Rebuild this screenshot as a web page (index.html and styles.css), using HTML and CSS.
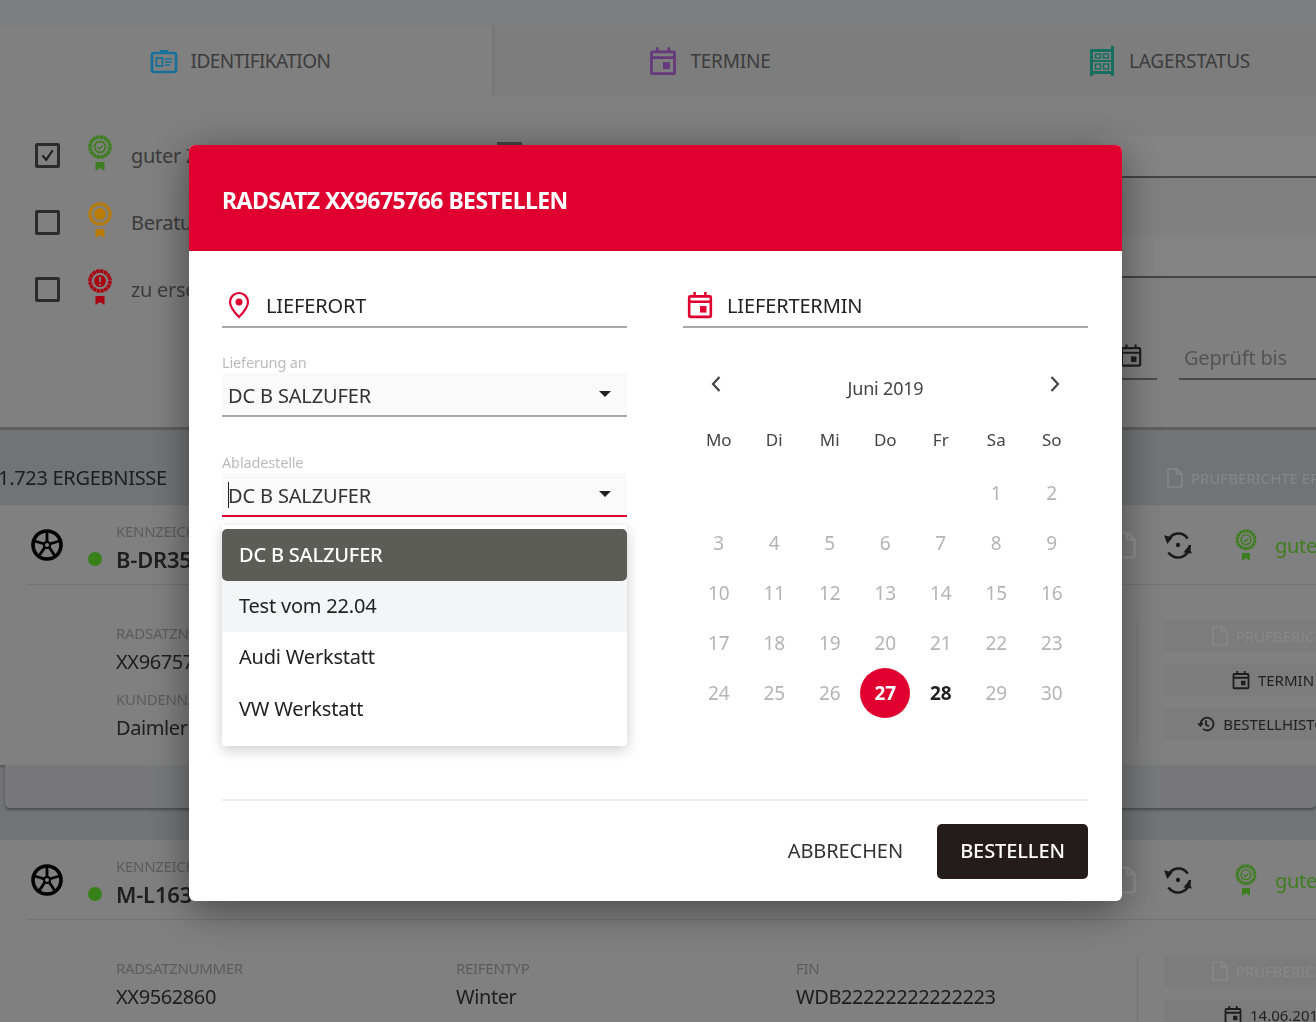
FILE: index.html
```html
<!DOCTYPE html>
<html lang="de">
<head>
    <meta charset="UTF-8">
    <title>Radsatz bestellen</title>
    <link rel="stylesheet" href="styles.css">
</head>
<body>
    <svg class="sprite" width="0" height="0">
        <symbol id="calendar" viewBox="0 0 24 26">
            <path d="M3 5h18a1 1 0 0 1 1 1v17a1 1 0 0 1-1 1H3a1 1 0 0 1-1-1V6a1 1 0 0 1 1-1zM2 10h20M7 1v5M17 1v5" fill="none" stroke="currentColor" stroke-width="2.4"/>
            <rect x="12" y="14" width="6" height="6" fill="currentColor"/>
        </symbol>
        <symbol id="medal-base" viewBox="0 0 24 36">
            <circle cx="12" cy="12" r="10" fill="none" stroke="currentColor" stroke-width="3.6" stroke-dasharray="3.4 .5"/>
            <path d="M7.500 27h9v9l-4.500-3-4.500 3z" fill="currentColor"/>
        </symbol>
        <symbol id="medal-ok" viewBox="0 0 24 36">
            <use href="#medal-base"/>
            <circle cx="12" cy="12" r="5.500" fill="none" stroke="currentColor" stroke-width="1.800"/>
            <path d="M9.500 12l2 2 3.500-3.500" fill="none" stroke="currentColor" stroke-width="1.500"/>
        </symbol>
        <symbol id="wheel" viewBox="0 0 32 34">
            <circle cx="16" cy="17" r="14" fill="none" stroke="currentColor" stroke-width="3.600"/>
            <circle cx="16" cy="17" r="3" fill="none" stroke="currentColor" stroke-width="2"/>
            <path d="M16 4v10M3.500 13l10 3M8 28l6-9M24 28l-6-9M28.500 13l-10 3" stroke="currentColor" stroke-width="2.800"/>
        </symbol>
        <symbol id="sync" viewBox="0 0 28 28">
            <path d="M5 10a10 10 0 0 1 18-2M25 14a11 11 0 0 1-20 7" fill="none" stroke="currentColor" stroke-width="2.400"/>
            <path d="M1 5l8 2-5 6zM27 22l-8-1 5-6z" fill="currentColor"/>
            <circle cx="14" cy="14" r="2" fill="currentColor"/>
        </symbol>
        <symbol id="doc" viewBox="0 0 16 20">
            <path d="M2 1h8l5 5v12a1 1 0 0 1-1 1H2a1 1 0 0 1-1-1V2a1 1 0 0 1 1-1zM9.500 1v5h5" fill="none" stroke="currentColor" stroke-width="1.600"/>
        </symbol>
        <symbol id="history" viewBox="0 0 24 24">
            <path d="M5 12a8.500 8.500 0 1 1 3 6.500M12 7v6l4 2" fill="none" stroke="currentColor" stroke-width="2.400"/>
            <path d="M0 11h9l-4.500 5z" fill="currentColor"/>
        </symbol>
    </svg>

    <div class="page">
        <div class="topbar"></div>

        <nav class="tabs">
            <div class="tab tab-first">
                <svg class="tab-icon icon-blue" viewBox="0 0 28 26">
                    <rect x="2" y="5" width="24" height="19" rx="2" fill="none" stroke="currentColor" stroke-width="2.600"/>
                    <path d="M10 2h8v4h-8z" fill="currentColor"/>
                    <rect x="6.500" y="10" width="6" height="8" fill="none" stroke="currentColor" stroke-width="1.800"/>
                    <path d="M15 11h7M15 14h7M15 17h5" stroke="currentColor" stroke-width="1.600"/>
                </svg>
                IDENTIFIKATION
            </div>
            <div class="tab tab-second">
                <svg class="tab-icon icon-purple"><use href="#calendar"/></svg>
                TERMINE
            </div>
            <div class="tab">
                <svg class="tab-icon icon-teal" viewBox="0 0 26 30">
                    <path d="M22 0h3v30h-3v-2H4v2H1V3h21z" fill="currentColor"/>
                    <path d="M4 6h18v8H4zM4 16h18v9H4z" fill="#a0a0a0"/>
                    <path d="M6.500 8h5v4h-5zM14.500 8h5v4h-5zM6.500 18h5v5h-5zM14.500 18h5v5h-5z" fill="none" stroke="currentColor" stroke-width="1.600"/>
                </svg>
                LAGERSTATUS
            </div>
        </nav>

        <section class="filters">
            <div class="quality-list">
                <div class="quality-row">
                    <span class="check">
                        <svg viewBox="0 0 20 20"><path d="M4 10l4.500 5L16 4" fill="none" stroke="currentColor" stroke-width="2.400"/></svg>
                    </span>
                    <svg class="medal medal-green"><use href="#medal-ok"/></svg>
                    <span>guter Zustand</span>
                </div>
                <div class="quality-row">
                    <span class="check"></span>
                    <svg class="medal medal-yellow" viewBox="0 0 24 36">
                        <use href="#medal-base"/>
                        <circle cx="12" cy="12" r="6" fill="currentColor"/>
                    </svg>
                    <span>Beratung</span>
                </div>
                <div class="quality-row">
                    <span class="check"></span>
                    <svg class="medal medal-red" viewBox="0 0 24 36">
                        <use href="#medal-base"/>
                        <circle cx="12" cy="12" r="6" fill="currentColor"/>
                        <path d="M12 8v5M12 14.500v2" stroke="#a0a0a0" stroke-width="1.800"/>
                    </svg>
                    <span>zu ersetzen</span>
                </div>
            </div>
            <div class="filter-middle"><span class="filter-mark"></span></div>
            <div class="filter-fields">
                <div class="filter-field"></div>
                <div class="filter-field"></div>
                <div class="date-row">
                    <div class="date-field">
                        <svg class="date-icon"><use href="#calendar"/></svg>
                    </div>
                    <div class="date-field date-to">Geprüft bis</div>
                </div>
            </div>
        </section>

        <div class="results-bar">
            <span class="results-count">1.723 ERGEBNISSE</span>
            <span class="results-action">
                <svg class="doc-small"><use href="#doc"/></svg>
                PRÜFBERICHTE ERSTELLEN
            </span>
        </div>

        <article class="card card-open">
            <header class="card-head">
                <svg class="wheel"><use href="#wheel"/></svg>
                <div class="plate">
                    <span class="label plate-label">KENNZEICHEN</span>
                    <div class="plate-value"><i class="dot"></i><b>B-DR3525</b></div>
                </div>
                <div class="head-side">
                    <svg class="doc-icon"><use href="#doc"/></svg>
                    <svg class="sync"><use href="#sync"/></svg>
                    <span class="head-rule"></span>
                    <svg class="medal medal-green medal-head"><use href="#medal-ok"/></svg>
                    <span class="status">guter Zustand</span>
                </div>
            </header>
            <div class="card-body">
                <div class="card-fields">
                    <div class="field">
                        <span class="label">RADSATZNUMMER</span>
                        <span class="value">XX9675766</span>
                    </div>
                    <div class="field">
                        <span class="label">KUNDENNAME</span>
                        <span class="value">Daimler AG</span>
                    </div>
                </div>
                <div class="card-actions">
                    <span class="action action-off"><svg class="doc-small"><use href="#doc"/></svg>PRÜFBERICHT</span>
                    <span class="action"><svg class="action-icon"><use href="#calendar"/></svg>TERMIN</span>
                    <span class="action"><svg class="action-icon"><use href="#history"/></svg>BESTELLHISTORIE</span>
                </div>
            </div>
        </article>
        <div class="card-drawer"></div>

        <article class="card">
            <header class="card-head">
                <svg class="wheel"><use href="#wheel"/></svg>
                <div class="plate">
                    <span class="label plate-label">KENNZEICHEN</span>
                    <div class="plate-value"><i class="dot"></i><b>M-L163</b></div>
                </div>
                <div class="head-side">
                    <svg class="doc-icon"><use href="#doc"/></svg>
                    <svg class="sync"><use href="#sync"/></svg>
                    <span class="head-rule"></span>
                    <svg class="medal medal-green medal-head"><use href="#medal-ok"/></svg>
                    <span class="status">guter Zustand</span>
                </div>
            </header>
            <div class="card-body">
                <div class="card-fields card-fields-row">
                    <div class="field">
                        <span class="label">RADSATZNUMMER</span>
                        <span class="value">XX9562860</span>
                    </div>
                    <div class="field">
                        <span class="label">REIFENTYP</span>
                        <span class="value">Winter</span>
                    </div>
                    <div class="field">
                        <span class="label">FIN</span>
                        <span class="value">WDB22222222222223</span>
                    </div>
                </div>
                <div class="card-actions">
                    <span class="action action-off"><svg class="doc-small"><use href="#doc"/></svg>PRÜFBERICHT</span>
                    <span class="action action-date"><svg class="action-icon"><use href="#calendar"/></svg>14.06.2019</span>
                </div>
            </div>
        </article>
    </div>

    <div class="overlay">
        <div class="modal">
            <div class="modal-head">RADSATZ XX9675766 BESTELLEN</div>
            <div class="modal-body">
                <div class="modal-columns">
                    <div class="modal-col">
                        <h3 class="section-title">
                            <svg class="section-pin" viewBox="0 0 22 28">
                                <path d="M11 2a9 9 0 0 1 9 9c0 5-4 10-9 15C6 21 2 16 2 11a9 9 0 0 1 9-9z" fill="none" stroke="currentColor" stroke-width="2.200"/>
                                <circle cx="11" cy="11" r="3.500" fill="currentColor"/>
                            </svg>
                            LIEFERORT
                        </h3>
                        <label class="select-label">Lieferung an</label>
                        <div class="select">DC B SALZUFER<i class="select-arrow"></i></div>
                        <label class="select-label select-label-next">Abladestelle</label>
                        <div class="select select-active"><i class="text-caret"></i>DC B SALZUFER<i class="select-arrow"></i></div>
                        <ul class="dropdown">
                            <li class="dropdown-item dropdown-selected">DC B SALZUFER</li>
                            <li class="dropdown-item dropdown-hover">Test vom 22.04</li>
                            <li class="dropdown-item">Audi Werkstatt</li>
                            <li class="dropdown-item">VW Werkstatt</li>
                        </ul>
                    </div>
                    <div class="modal-col">
                        <h3 class="section-title">
                            <svg class="section-cal"><use href="#calendar"/></svg>
                            LIEFERTERMIN
                        </h3>
                        <div class="month-head">
                            <svg class="chevron" viewBox="0 0 12 18"><path d="M9.500 2L3 9l6.500 7" fill="none" stroke="currentColor" stroke-width="2.200"/></svg>
                            <span class="month-name">Juni 2019</span>
                            <svg class="chevron" viewBox="0 0 12 18"><path d="M2.500 2L9 9l-6.500 7" fill="none" stroke="currentColor" stroke-width="2.200"/></svg>
                        </div>
                        <div class="weekdays">
                            <span>Mo</span><span>Di</span><span>Mi</span><span>Do</span><span>Fr</span><span>Sa</span><span>So</span>
                        </div>
                        <div class="days">
                            <span></span><span></span><span></span><span></span><span></span><span>1</span><span>2</span>
                            <span>3</span><span>4</span><span>5</span><span>6</span><span>7</span><span>8</span><span>9</span>
                            <span>10</span><span>11</span><span>12</span><span>13</span><span>14</span><span>15</span><span>16</span>
                            <span>17</span><span>18</span><span>19</span><span>20</span><span>21</span><span>22</span><span>23</span>
                            <span>24</span><span>25</span><span>26</span><span class="day-selected">27</span><span class="day-next">28</span><span>29</span><span>30</span>
                        </div>
                    </div>
                </div>
                <footer class="modal-foot">
                    <button class="btn-text">ABBRECHEN</button>
                    <button class="btn-dark">BESTELLEN</button>
                </footer>
            </div>
        </div>
    </div>
</body>
</html>
```

FILE: styles.css
```css
* {
    box-sizing: border-box;
}
html, body {
    height: 100%;
}
body {
    margin: 0;
    overflow: hidden;
    font-family: "Noto Sans", "Open Sans", sans-serif;
    background-color: #8e9194;
    color: #222;
}
svg {
    display: block;
    flex: none;
}
.sprite {
    position: absolute;
}

/* page behind the dialog, colours already dimmed */
.page {
    width: 1316px;
    filter: blur(0.5px);
}
.topbar {
    height: 27px;
    background-color: #9c9ea0;
}
.tabs {
    display: grid;
    grid-template-columns: 495px 430px 391px;
    height: 68px;
    background-color: #a0a0a0;
}
.tab {
    display: flex;
    align-items: center;
    justify-content: center;
    gap: 13px;
    font-size: 19px;
    letter-spacing: -0.2px;
    color: #4c4c4c;
    background-color: #9d9d9d;
    border-bottom: 1px solid #9a9a9a;
    white-space: nowrap;
}
.tab:last-child {
    justify-content: flex-start;
    padding-left: 163px;
}
.tab-first {
    padding-right: 12px;
    letter-spacing: -0.55px;
    background-color: #a0a0a0;
    border-bottom: 0;
    border-right: 3px solid #959595;
}
.tab-icon {
    width: 28px;
    height: 30px;
}
.icon-blue { color: #1c8cc0; }
.icon-purple { color: #80489c; }
.icon-teal { color: #1c8a78; }

.filters {
    display: grid;
    grid-template-columns: 497px 463px 1fr;
    height: 335px;
    background-color: #a0a0a0;
    border-bottom: 3px solid #777;
}
.quality-list {
    padding: 27px 0 0 35px;
}
.quality-row {
    display: flex;
    align-items: center;
    height: 67px;
    font-size: 20px;
    letter-spacing: -0.3px;
    color: #4b4b4b;
}
.check {
    display: block;
    width: 25px;
    height: 25px;
    margin-right: 28px;
    padding: 1px;
    border: 3px solid #363636;
    border-radius: 2px;
    color: #262626;
}
.medal {
    width: 24px;
    height: 36px;
    margin: -6px 19px 0 0;
}
.medal-green { color: #4f9e28; }
.medal-yellow { color: #e89c08; }
.medal-red { color: #d40016; }
.filter-middle {
    padding-top: 47px;
}
.filter-mark {
    display: block;
    width: 25px;
    height: 3px;
    background-color: #555;
}
.filter-fields {
    padding-top: 40px;
}
.filter-field {
    height: 43px;
    margin-bottom: 57px;
    background-color: #a5a5a5;
    border-bottom: 2px solid #555;
}
.date-row {
    display: flex;
    gap: 22px;
    margin-top: 61px;
    height: 41px;
}
.date-field {
    display: flex;
    justify-content: flex-end;
    width: 197px;
    padding-right: 15px;
    border-bottom: 2px solid #5a5a5a;
    color: #262626;
}
.date-to {
    flex: 1;
    justify-content: flex-start;
    padding: 5px 0 0 5px;
    font-size: 20px;
    letter-spacing: -0.2px;
    color: #6a6a6a;
}
.date-icon {
    width: 22px;
    height: 27px;
    margin-top: 3px;
}

.results-bar {
    display: flex;
    align-items: center;
    justify-content: space-between;
    height: 75px;
    padding-top: 20px;
    background-color: #8e9194;
    font-size: 20px;
    color: #262626;
}
.results-count {
    margin-left: -2px;
    letter-spacing: -0.3px;
}
.results-action {
    display: flex;
    align-items: center;
    gap: 8px;
    width: 149px;
    font-size: 15px;
    white-space: nowrap;
    color: #a6a9ac;
}
.doc-small {
    width: 16px;
    height: 20px;
}

.card {
    background-color: #a0a0a0;
}
.card-open {
    height: 260px;
    box-shadow: 0 2px 3px rgba(0, 0, 0, 0.3);
}
.card-drawer {
    height: 43px;
    margin: 0 0 32px 5px;
    background-color: #96979a;
    border-radius: 0 0 5px 5px;
    box-shadow: 0 2px 3px rgba(0, 0, 0, 0.35);
}
.card-head {
    display: flex;
    align-items: flex-start;
    height: 80px;
    margin-left: 27px;
    border-bottom: 1px solid #909090;
}
.wheel {
    width: 32px;
    height: 34px;
    margin: 23px 0 0 4px;
    color: #000;
}
.plate {
    margin: 16px 0 0 25px;
}
.label {
    display: block;
    font-size: 15px;
    line-height: 20px;
    letter-spacing: -0.3px;
    color: #747474;
}
.plate-label {
    margin-left: 28px;
}
.plate-value {
    display: flex;
    align-items: center;
    gap: 14px;
    margin-top: 4px;
    font-size: 22px;
    line-height: 28px;
    color: #262626;
}
.plate-value b {
    font-weight: 600;
    letter-spacing: -0.2px;
}
.dot {
    width: 14px;
    height: 14px;
    border-radius: 50%;
    background-color: #46a020;
}
.head-side {
    display: flex;
    align-items: center;
    height: 54px;
    margin: 13px 0 0 auto;
    width: 203px;
    white-space: nowrap;
}
.doc-icon {
    width: 22px;
    height: 28px;
    margin: 0 27px 0 1px;
    color: #b4b4b4;
}
.sync {
    width: 30px;
    height: 30px;
    color: #202020;
}
.head-rule {
    align-self: stretch;
    width: 1px;
    margin: 0 17px 0 25px;
    background-color: #909090;
}
.medal-head {
    width: 22px;
    height: 32px;
    margin: 0 18px 0 0;
}
.status {
    font-size: 20px;
    letter-spacing: -0.3px;
    color: #4f9e28;
}
.card-body {
    display: flex;
    justify-content: space-between;
    padding: 35px 0 0 116px;
}
.card-fields {
    display: flex;
    flex-direction: column;
    gap: 13px;
    padding-top: 3px;
}
.card-fields-row {
    flex-direction: row;
    gap: 0;
}
.card-fields-row .field {
    width: 340px;
}
.value {
    display: block;
    margin-top: 5px;
    font-size: 20px;
    line-height: 28px;
    letter-spacing: -0.4px;
    color: #262626;
}
.card-actions {
    display: flex;
    flex-direction: column;
    gap: 12px;
    width: 179px;
    height: 122px;
    padding-left: 26px;
    border-left: 1px solid #909090;
}
.action {
    display: flex;
    align-items: center;
    justify-content: center;
    gap: 8px;
    width: 218px;
    height: 32px;
    flex: none;
    border-radius: 3px;
    background-color: #9b9b9b;
    font-size: 15px;
    white-space: nowrap;
    color: #2a2a2a;
}
.action-off {
    color: #aaa;
}
.action-icon {
    width: 18px;
    height: 20px;
    color: #262626;
}
.action-date {
    justify-content: flex-start;
    padding-left: 60px;
}

/* dialog */
.overlay {
    position: absolute;
    inset: 0;
    padding: 145px 0 0 189px;
    background-color: rgba(0, 0, 0, 0.2);
}
.modal {
    width: 933px;
    height: 756px;
    border-radius: 6px;
    overflow: hidden;
    background-color: #fff;
    box-shadow: 0 8px 40px rgba(0, 0, 0, 0.45);
    filter: blur(0.4px);
}
.modal-head {
    height: 106px;
    padding: 39px 33px 0;
    background-color: #df0030;
    font-size: 23px;
    line-height: 32px;
    font-weight: 700;
    letter-spacing: -0.55px;
    color: #fff;
}
.modal-body {
    padding: 39px 34px 0 33px;
}
.modal-columns {
    display: grid;
    grid-template-columns: 405px 405px;
    column-gap: 56px;
    height: 509px;
}
.modal-col {
    position: relative;
}
.section-title {
    display: flex;
    align-items: center;
    height: 38px;
    margin: 0;
    border-bottom: 2px solid #a8a8a8;
    padding-bottom: 6px;
    font-size: 20px;
    font-weight: 400;
    letter-spacing: -0.15px;
    color: #222;
}
.section-pin {
    width: 22px;
    height: 28px;
    margin: 0 16px 0 6px;
    color: #df0030;
}
.section-cal {
    width: 26px;
    height: 30px;
    margin: 0 14px 0 4px;
    color: #df0030;
}
.select-label {
    display: block;
    margin-top: 24px;
    font-size: 14.500px;
    line-height: 20px;
    letter-spacing: -0.15px;
    color: #bbb;
}
.select-label-next {
    margin-top: 35px;
}
.select {
    display: flex;
    align-items: center;
    height: 44px;
    margin-top: 1px;
    padding: 2px 16px 0 6px;
    background-color: #fafafa;
    border-bottom: 2px solid #a8a8a8;
    font-size: 20px;
    letter-spacing: -0.15px;
    color: #333;
}
.select-active {
    border-bottom-color: #df0030;
}
.select-arrow {
    width: 0;
    height: 0;
    margin-left: auto;
    margin-top: -2px;
    border-style: solid;
    border-width: 6px 6px 0;
    border-color: #222 transparent transparent;
}
.text-caret {
    width: 1px;
    height: 26px;
    margin-right: -1px;
    background-color: #222;
}
.dropdown {
    position: absolute;
    top: 235px;
    left: 0;
    right: 0;
    margin: 0;
    padding: 4px 0 11px;
    list-style: none;
    background-color: #fff;
    border-radius: 3px;
    box-shadow: 0 4px 14px rgba(0, 0, 0, 0.2);
}
.dropdown-item {
    display: flex;
    align-items: center;
    height: 51.500px;
    padding: 0 0 2px 17px;
    font-size: 20px;
    letter-spacing: -0.2px;
    color: #222;
}
.dropdown-selected {
    padding-bottom: 0;
    border-radius: 5px;
    background-color: #5d5d58;
    color: #fff;
    font-weight: 500;
}
.dropdown-hover {
    background-color: #f3f5f6;
}

.month-head {
    display: flex;
    align-items: center;
    justify-content: space-between;
    height: 24px;
    margin-top: 44px;
    padding: 0 27px;
    font-size: 18px;
    letter-spacing: -0.2px;
    color: #444;
}
.month-name {
    padding-top: 7px;
}
.chevron {
    width: 12px;
    height: 18px;
    color: #444;
}
.weekdays, .days {
    display: grid;
    grid-template-columns: repeat(7, 55.500px);
    margin-left: 8px;
    justify-items: center;
}
.weekdays {
    margin-top: 30px;
    height: 28px;
    font-size: 17px;
    line-height: 28px;
    color: #444;
}
.days {
    margin-top: 14px;
    grid-auto-rows: 50px;
    align-items: center;
    font-size: 19px;
    color: #b4b4b4;
}
.days span {
    display: flex;
    align-items: center;
    justify-content: center;
    width: 50px;
    height: 50px;
}
.days .day-selected {
    border-radius: 50%;
    background-color: #df0030;
    color: #fff;
    font-weight: 700;
}
.days .day-next {
    color: #222;
    font-weight: 700;
}

.modal-foot {
    display: flex;
    align-items: center;
    justify-content: flex-end;
    gap: 34px;
    padding-top: 23px;
    border-top: 2px solid #eee;
}
.btn-text, .btn-dark {
    font: inherit;
    font-size: 20px;
    letter-spacing: -0.1px;
    border: 0;
    cursor: pointer;
}
.btn-text {
    padding: 0 0 2px;
    background: none;
    color: #333;
}
.btn-dark {
    width: 151px;
    height: 55px;
    padding: 0 0 2px;
    border-radius: 5px;
    background-color: #241c1a;
    color: #fff;
    font-weight: 500;
}
```
